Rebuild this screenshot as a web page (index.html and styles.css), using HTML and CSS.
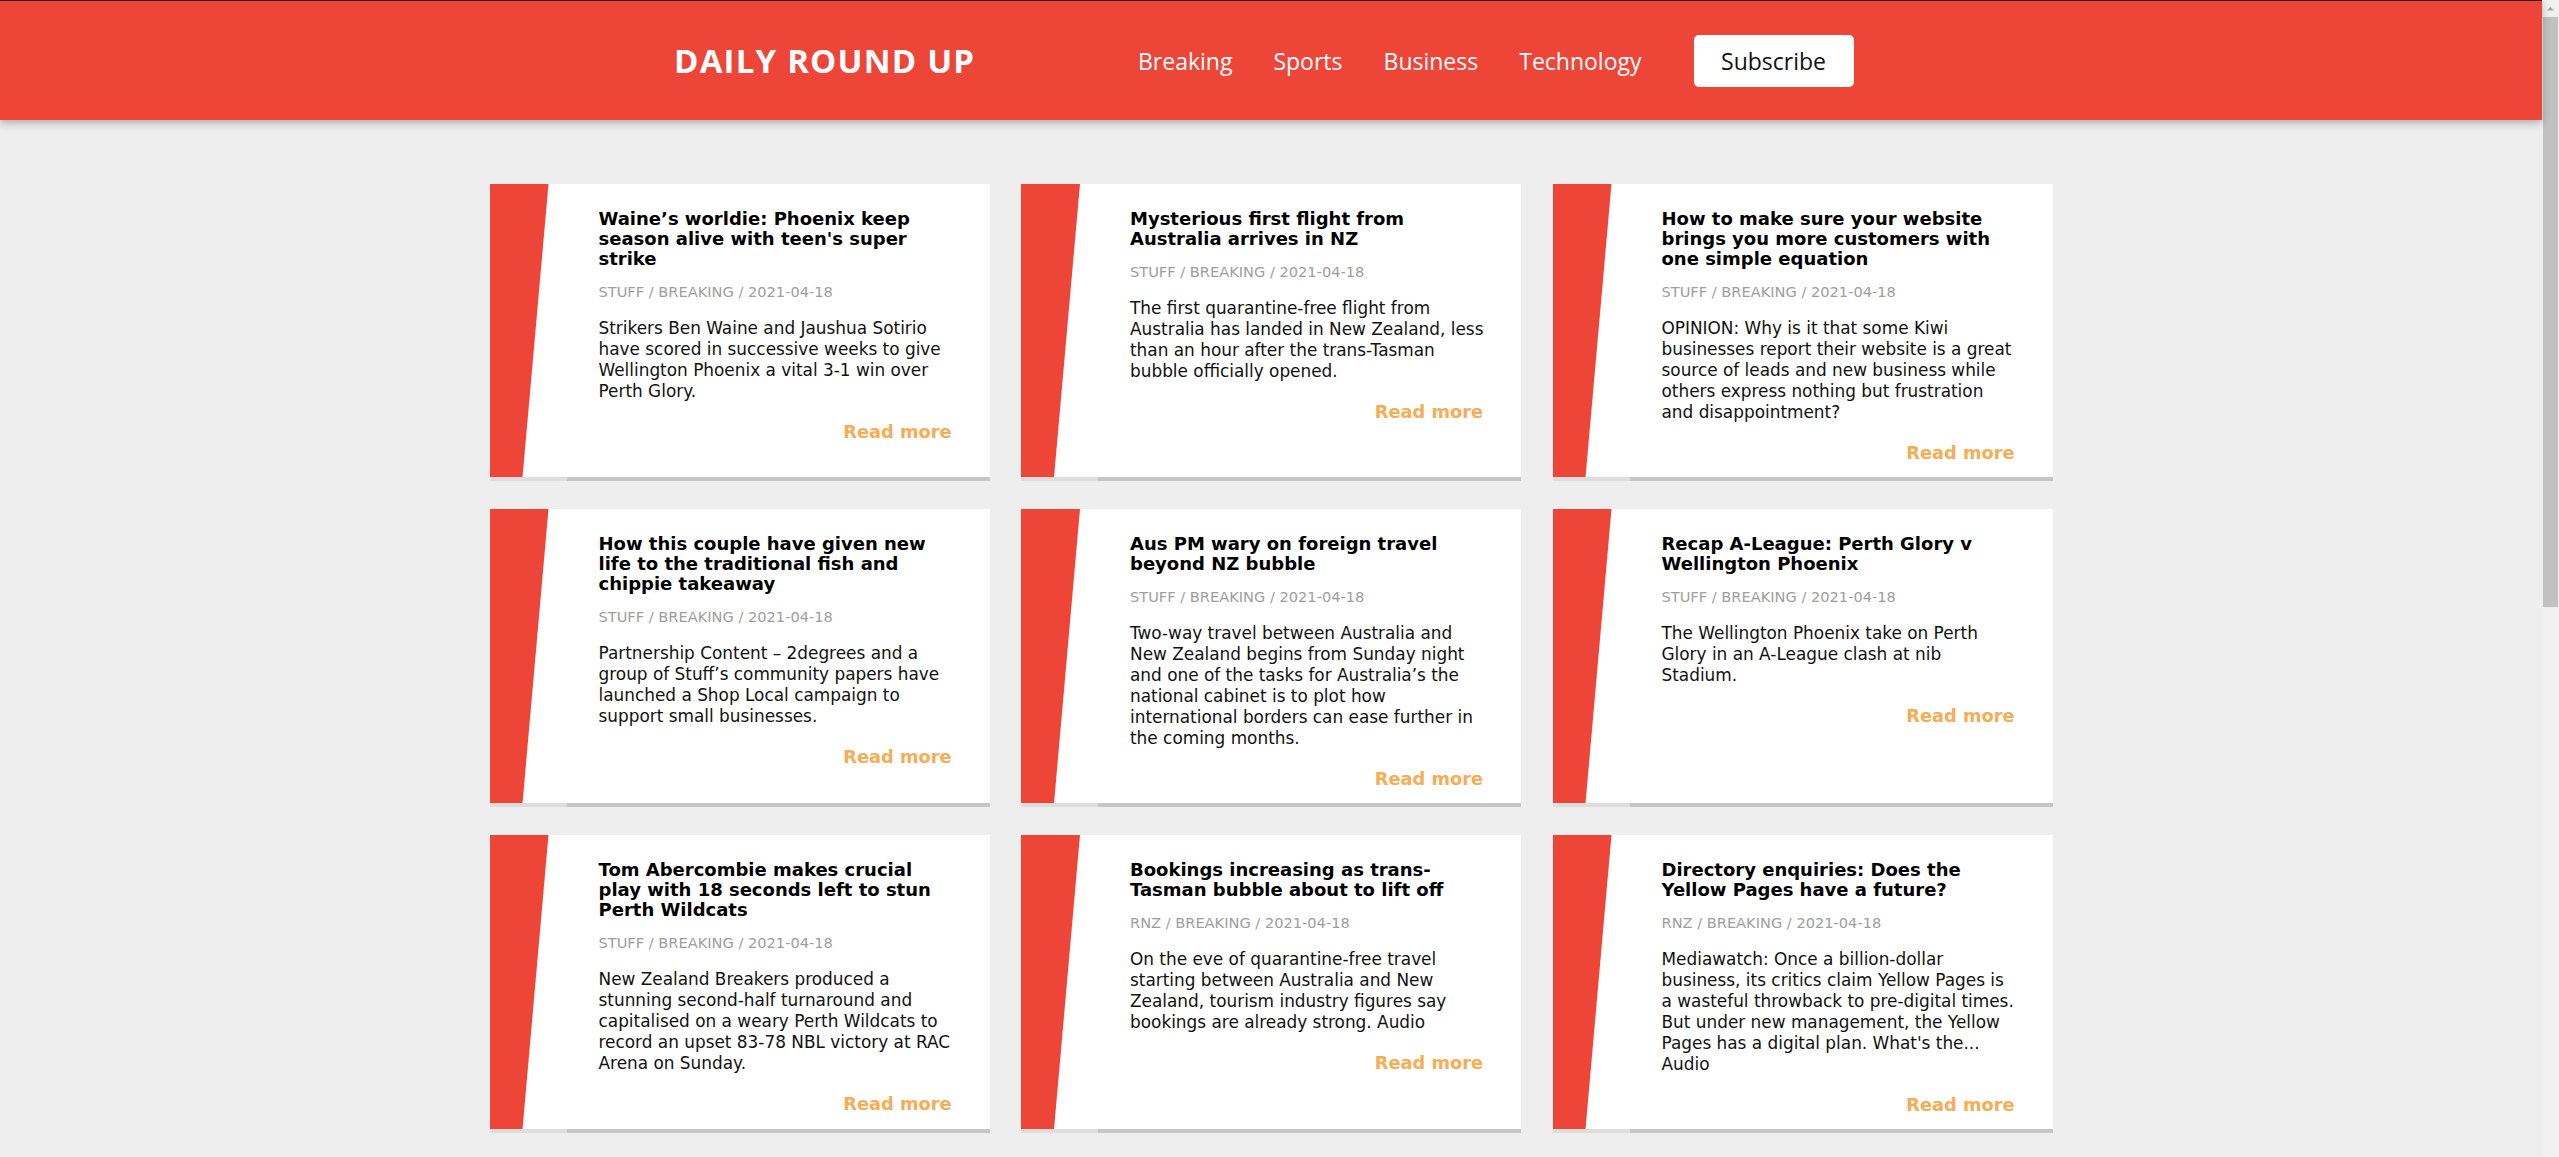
FILE: index.html
```html
<!DOCTYPE html>
<html lang="en">
<head>
<meta charset="utf-8">
<title>Daily Round Up</title>
<link rel="stylesheet" href="styles.css">
</head>
<body>
<header class="site-header">
  <div class="header-inner">
    <h1 class="brand">DAILY ROUND UP</h1>
    <nav class="nav">
      <a href="#">Breaking</a>
      <a href="#">Sports</a>
      <a href="#">Business</a>
      <a href="#">Technology</a>
    </nav>
    <a class="subscribe" href="#">Subscribe</a>
  </div>
</header>
<main class="feed">
  <article class="card">
    <div class="accent"></div>
    <div class="card-body">
      <h2 class="card-title">Waine’s worldie: Phoenix keep season alive with teen's super strike</h2>
      <p class="meta">STUFF / BREAKING / 2021-04-18</p>
      <p class="excerpt">Strikers Ben Waine and Jaushua Sotirio have scored in successive weeks to give Wellington Phoenix a vital 3-1 win over Perth Glory.</p>
      <a class="read-more" href="#">Read more</a>
    </div>
  </article>
  <article class="card">
    <div class="accent"></div>
    <div class="card-body">
      <h2 class="card-title">Mysterious first flight from Australia arrives in NZ</h2>
      <p class="meta">STUFF / BREAKING / 2021-04-18</p>
      <p class="excerpt">The first quarantine-free flight from Australia has landed in New Zealand, less than an hour after the trans-Tasman bubble officially opened.</p>
      <a class="read-more" href="#">Read more</a>
    </div>
  </article>
  <article class="card">
    <div class="accent"></div>
    <div class="card-body">
      <h2 class="card-title">How to make sure your website brings you more customers with one simple equation</h2>
      <p class="meta">STUFF / BREAKING / 2021-04-18</p>
      <p class="excerpt">OPINION: Why is it that some Kiwi businesses report their website is a great source of leads and new business while others express nothing but frustration and disappointment?</p>
      <a class="read-more" href="#">Read more</a>
    </div>
  </article>
  <article class="card">
    <div class="accent"></div>
    <div class="card-body">
      <h2 class="card-title">How this couple have given new life to the traditional fish and chippie takeaway</h2>
      <p class="meta">STUFF / BREAKING / 2021-04-18</p>
      <p class="excerpt">Partnership Content – 2degrees and a group of Stuff’s community papers have launched a Shop Local campaign to support small businesses.</p>
      <a class="read-more" href="#">Read more</a>
    </div>
  </article>
  <article class="card">
    <div class="accent"></div>
    <div class="card-body">
      <h2 class="card-title">Aus PM wary on foreign travel beyond NZ bubble</h2>
      <p class="meta">STUFF / BREAKING / 2021-04-18</p>
      <p class="excerpt">Two-way travel between Australia and New Zealand begins from Sunday night and one of the tasks for Australia’s the national cabinet is to plot how international borders can ease further in the coming months.</p>
      <a class="read-more" href="#">Read more</a>
    </div>
  </article>
  <article class="card">
    <div class="accent"></div>
    <div class="card-body">
      <h2 class="card-title">Recap A-League: Perth Glory v Wellington Phoenix</h2>
      <p class="meta">STUFF / BREAKING / 2021-04-18</p>
      <p class="excerpt">The Wellington Phoenix take on Perth Glory in an A-League clash at nib Stadium.</p>
      <a class="read-more" href="#">Read more</a>
    </div>
  </article>
  <article class="card">
    <div class="accent"></div>
    <div class="card-body">
      <h2 class="card-title">Tom Abercombie makes crucial play with 18 seconds left to stun Perth Wildcats</h2>
      <p class="meta">STUFF / BREAKING / 2021-04-18</p>
      <p class="excerpt">New Zealand Breakers produced a stunning second-half turnaround and capitalised on a weary Perth Wildcats to record an upset 83-78 NBL victory at RAC Arena on Sunday.</p>
      <a class="read-more" href="#">Read more</a>
    </div>
  </article>
  <article class="card">
    <div class="accent"></div>
    <div class="card-body">
      <h2 class="card-title">Bookings increasing as trans-Tasman bubble about to lift off</h2>
      <p class="meta">RNZ / BREAKING / 2021-04-18</p>
      <p class="excerpt">On the eve of quarantine-free travel starting between Australia and New Zealand, tourism industry figures say bookings are already strong. Audio</p>
      <a class="read-more" href="#">Read more</a>
    </div>
  </article>
  <article class="card">
    <div class="accent"></div>
    <div class="card-body">
      <h2 class="card-title">Directory enquiries: Does the Yellow Pages have a future?</h2>
      <p class="meta">RNZ / BREAKING / 2021-04-18</p>
      <p class="excerpt">Mediawatch: Once a billion-dollar business, its critics claim Yellow Pages is a wasteful throwback to pre-digital times. But under new management, the Yellow Pages has a digital plan. What's the... Audio</p>
      <a class="read-more" href="#">Read more</a>
    </div>
  </article>
  <article class="card">
    <div class="accent"></div>
    <div class="card-body">
      <h2 class="card-title">Families reunite at Auckland Airport as the travel bubble opens</h2>
      <p class="meta">RNZ / BREAKING / 2021-04-18</p>
      <p class="excerpt">There were tears and hugs in the arrivals hall as the first passengers from Sydney walked through the gates this morning.</p>
      <a class="read-more" href="#">Read more</a>
    </div>
  </article>
  <article class="card">
    <div class="accent"></div>
    <div class="card-body">
      <h2 class="card-title">Black Caps name squad for the tour of England</h2>
      <p class="meta">STUFF / BREAKING / 2021-04-18</p>
      <p class="excerpt">Selectors have named a 20-man squad for the two-test series in England and the World Test Championship final.</p>
      <a class="read-more" href="#">Read more</a>
    </div>
  </article>
  <article class="card">
    <div class="accent"></div>
    <div class="card-body">
      <h2 class="card-title">House prices continue to climb in regional centres</h2>
      <p class="meta">STUFF / BREAKING / 2021-04-18</p>
      <p class="excerpt">New figures show median prices rose again last month, with the biggest gains recorded outside the main cities.</p>
      <a class="read-more" href="#">Read more</a>
    </div>
  </article>
  <article class="card">
    <div class="accent"></div>
    <div class="card-body">
      <h2 class="card-title">Weather: Cold snap brings snow to the Central Plateau</h2>
      <p class="meta">RNZ / BREAKING / 2021-04-18</p>
      <p class="excerpt">Motorists are being urged to take care on the Desert Road as temperatures drop overnight across the North Island.</p>
      <a class="read-more" href="#">Read more</a>
    </div>
  </article>
  <article class="card">
    <div class="accent"></div>
    <div class="card-body">
      <h2 class="card-title">Super Rugby Aotearoa: Crusaders hold on to beat Blues</h2>
      <p class="meta">STUFF / BREAKING / 2021-04-18</p>
      <p class="excerpt">The Crusaders survived a late comeback to stay unbeaten in the competition with a tense win in Christchurch.</p>
      <a class="read-more" href="#">Read more</a>
    </div>
  </article>
  <article class="card">
    <div class="accent"></div>
    <div class="card-body">
      <h2 class="card-title">Tech start-up lands major overseas investment</h2>
      <p class="meta">STUFF / BREAKING / 2021-04-18</p>
      <p class="excerpt">The Wellington company says the funding will help it hire more engineers and expand into the Australian market.</p>
      <a class="read-more" href="#">Read more</a>
    </div>
  </article>
  <article class="card">
    <div class="accent"></div>
    <div class="card-body">
      <h2 class="card-title">Council votes on new cycleway plan</h2>
      <p class="meta">RNZ / BREAKING / 2021-04-18</p>
      <p class="excerpt">Councillors will decide this week whether to go ahead with the proposed network of protected cycle lanes.</p>
      <a class="read-more" href="#">Read more</a>
    </div>
  </article>
  <article class="card">
    <div class="accent"></div>
    <div class="card-body">
      <h2 class="card-title">Kiwi film picks up award at international festival</h2>
      <p class="meta">STUFF / BREAKING / 2021-04-18</p>
      <p class="excerpt">The locally made feature was praised by the jury for its striking cinematography and strong performances.</p>
      <a class="read-more" href="#">Read more</a>
    </div>
  </article>
  <article class="card">
    <div class="accent"></div>
    <div class="card-body">
      <h2 class="card-title">Ferry services disrupted by mechanical fault</h2>
      <p class="meta">RNZ / BREAKING / 2021-04-18</p>
      <p class="excerpt">Passengers crossing Cook Strait face delays after one of the ships was taken out of service for repairs.</p>
      <a class="read-more" href="#">Read more</a>
    </div>
  </article>
</main>
</body>
</html>
```
FILE: styles.css
```css
* {
  box-sizing: border-box;
}

html,
body {
  margin: 0;
}

body {
  padding-right: 17px;
  font-family: "DejaVu Sans", Verdana, sans-serif;
  color: #111111;
  background:
    url("data:image/svg+xml;utf8,<svg xmlns='http://www.w3.org/2000/svg' width='17' height='17'><path d='M5 10.5 L8.5 7 L12 10.5 Z' fill='%23a3a3a3'/></svg>") right top / 17px 17px no-repeat,
    linear-gradient(#c1c1c1, #c1c1c1) right 1px top 17px / 15px 590px no-repeat,
    linear-gradient(#f0f0f0, #f0f0f0) right top / 17px 100% no-repeat,
    #eeeeee;
}

/* ---------- header ---------- */
.site-header {
  height: 120px;
  background: #ee4539;
  border-top: 1px solid #2b1b19;
  box-shadow: 0 3px 8px rgba(0, 0, 0, 0.28);
}

.header-inner {
  width: 1200px;
  height: 100%;
  margin: 0 auto;
  display: flex;
  align-items: center;
}

.brand {
  flex: 0 0 467px;
  margin: 0;
  padding-left: 3px;
  font-family: "Open Sans", "Noto Sans", sans-serif;
  font-weight: 700;
  font-size: 33px;
  letter-spacing: 1.2px;
  color: #ffffff;
}

.nav {
  display: flex;
  gap: 41px;
}

.nav a {
  font-family: "Open Sans", "Noto Sans", sans-serif;
  font-size: 23px;
  color: #ffffff;
  text-decoration: none;
}

.subscribe {
  margin-left: 52px;
  width: 160px;
  height: 52px;
  display: flex;
  align-items: center;
  justify-content: center;
  background: #ffffff;
  border-radius: 5px;
  font-family: "Open Sans", "Noto Sans", sans-serif;
  font-size: 23px;
  color: #111111;
  text-decoration: none;
}

/* ---------- feed ---------- */
.feed {
  width: 1563px;
  margin: 0 auto;
  padding: 64px 0;
  display: grid;
  grid-template-columns: repeat(3, 500px);
  gap: 32px 31.5px;
}

.card {
  display: flex;
  background: #ffffff;
}

.accent {
  flex: 0 0 77px;
  display: flex;
  box-shadow: 0 4px 0 rgba(0, 0, 0, 0.07);
}

.accent::before {
  content: "";
  width: 59px;
  background: #ee4539;
  clip-path: polygon(0 0, 100% 0, 56% 100%, 0 100%);
}

.card-body {
  flex: 1;
  min-width: 0;
  padding: 25px 38px 14px 32px;
  box-shadow: 0 4px 0 rgba(0, 0, 0, 0.17);
}

.card-title {
  margin: 0;
  font-size: 18px;
  line-height: 20px;
  font-weight: 700;
  color: #000000;
}

.meta {
  margin: 14px 0 0;
  font-size: 14.6px;
  line-height: 18px;
  color: #9e9e9e;
}

.excerpt {
  margin: 17px -5px 0 0;
  font-size: 16.9px;
  line-height: 21px;
}

.read-more {
  display: block;
  margin-top: 20px;
  text-align: right;
  font-weight: 700;
  font-size: 17.8px;
  line-height: 20px;
  color: #f6ad55;
  text-decoration: none;
}
```
